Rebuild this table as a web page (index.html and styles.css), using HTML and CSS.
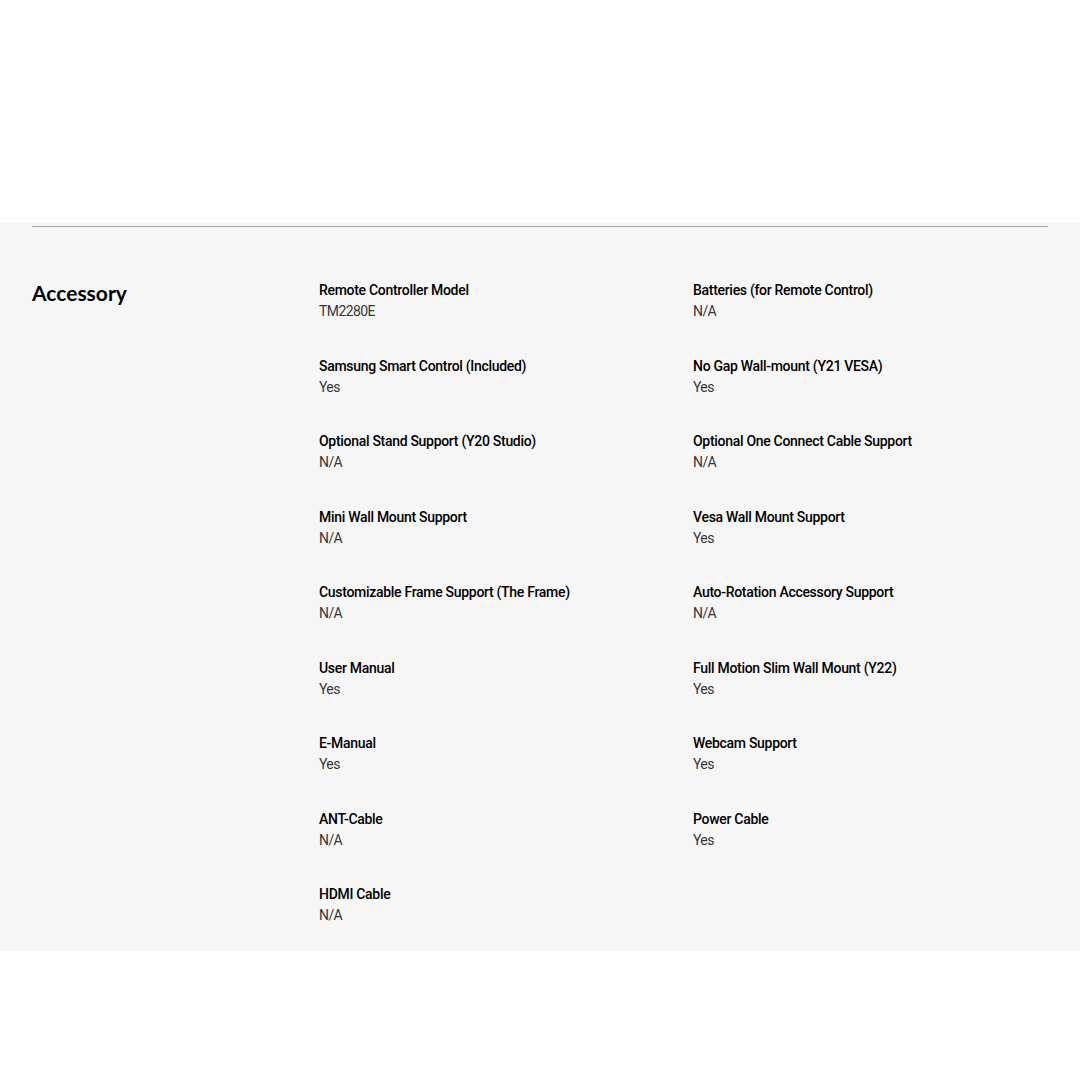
FILE: index.html
```html
<!DOCTYPE html>
<html>
<head>
<meta charset="utf-8">
<link rel="stylesheet" href="styles.css">
</head>
<body>
<div class="top"></div>
<section class="specs">
  <div class="rule"></div>
  <div class="group">
    <h2 class="group-title">Accessory</h2>
    <ul class="list">
      <li class="item"><p class="name">Remote Controller Model</p><p class="value">TM2280E</p></li>
      <li class="item"><p class="name">Batteries (for Remote Control)</p><p class="value">N/A</p></li>
      <li class="item"><p class="name">Samsung Smart Control (Included)</p><p class="value">Yes</p></li>
      <li class="item"><p class="name">No Gap Wall-mount (Y21 VESA)</p><p class="value">Yes</p></li>
      <li class="item"><p class="name">Optional Stand Support (Y20 Studio)</p><p class="value">N/A</p></li>
      <li class="item"><p class="name">Optional One Connect Cable Support</p><p class="value">N/A</p></li>
      <li class="item"><p class="name">Mini Wall Mount Support</p><p class="value">N/A</p></li>
      <li class="item"><p class="name">Vesa Wall Mount Support</p><p class="value">Yes</p></li>
      <li class="item"><p class="name">Customizable Frame Support (The Frame)</p><p class="value">N/A</p></li>
      <li class="item"><p class="name">Auto-Rotation Accessory Support</p><p class="value">N/A</p></li>
      <li class="item"><p class="name">User Manual</p><p class="value">Yes</p></li>
      <li class="item"><p class="name">Full Motion Slim Wall Mount (Y22)</p><p class="value">Yes</p></li>
      <li class="item"><p class="name">E-Manual</p><p class="value">Yes</p></li>
      <li class="item"><p class="name">Webcam Support</p><p class="value">Yes</p></li>
      <li class="item"><p class="name">ANT-Cable</p><p class="value">N/A</p></li>
      <li class="item"><p class="name">Power Cable</p><p class="value">Yes</p></li>
      <li class="item"><p class="name">HDMI Cable</p><p class="value">N/A</p></li>
    </ul>
  </div>
</section>
</body>
</html>
```
FILE: styles.css
```css
html, body {
  margin: 0;
  padding: 0;
  background: #ffffff;
}
body {
  font-family: "Roboto", "Noto Sans", sans-serif;
  color: #000;
}
.top {
  height: 222px;
}
.specs {
  background: #f6f6f6;
  padding: 4px 32px 25px;
}
.rule {
  height: 1px;
  background: #a3a3a3;
}
.group {
  display: grid;
  grid-template-columns: 287px 1fr;
  padding-top: 53px;
}
.group-title {
  margin: 0;
  font-family: "Lato", "Inter", sans-serif;
  font-weight: 700;
  font-size: 21px;
  line-height: 26px;
  letter-spacing: 0;
}
.list {
  list-style: none;
  margin: 0;
  padding: 0;
  display: grid;
  grid-template-columns: 374px 1fr;
  row-gap: 33.5px;
}
.item p {
  margin: 0;
  font-size: 14px;
  line-height: 21px;
}
.name {
  font-weight: 500;
  letter-spacing: -0.3px;
  color: #000;
}
.value {
  font-weight: 400;
  letter-spacing: -0.6px;
  color: #363636;
}
```
